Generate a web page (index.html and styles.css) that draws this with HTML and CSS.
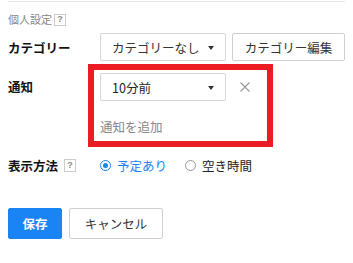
FILE: index.html
```html
<!DOCTYPE html>
<html lang="ja">
<head>
    <meta charset="UTF-8">
    <meta name="viewport" content="width=device-width, initial-scale=1.0">
    <title>個人設定</title>
    <link rel="stylesheet" href="styles.css">
</head>
<body>
    <div class="settings">
        <div class="section-title">個人設定<span class="help">?</span></div>

        <div class="row row-category">
            <div class="label">カテゴリー</div>
            <div class="controls">
                <div class="select select-category">カテゴリーなし<span class="caret"></span></div>
                <button class="btn btn-edit">カテゴリー編集</button>
            </div>
        </div>

        <div class="row row-notify">
            <div class="label label-top">通知</div>
            <div class="highlight">
                <div class="notify-item">
                    <div class="select select-time">10分前<span class="caret"></span></div>
                    <button class="remove" aria-label="削除">
                        <svg width="10" height="10" viewBox="0 0 10 10">
                            <path d="M0.5 0.5 L9.5 9.5 M9.5 0.5 L0.5 9.5" stroke="#9a9a9a" stroke-width="1.1" fill="none"/>
                        </svg>
                    </button>
                </div>
                <a class="add-link">通知を追加</a>
            </div>
        </div>

        <div class="row row-display">
            <div class="label">表示方法<span class="help help-inline">?</span></div>
            <label class="radio checked"><span class="radio-mark"></span>予定あり</label>
            <label class="radio"><span class="radio-mark"></span>空き時間</label>
        </div>

        <div class="actions">
            <button class="btn btn-primary">保存</button>
            <button class="btn btn-cancel">キャンセル</button>
        </div>
    </div>
</body>
</html>
```

FILE: styles.css
```css
body {
    margin: 0;
    font-family: "Noto Sans CJK JP", sans-serif;
    font-size: 12.5px;
    color: #222;
    background: #fff;
}
.settings {
    padding: 0 8px;
}
.section-title {
    margin-top: 1px;
    border-top: 1px solid #e8e8e8;
    padding-top: 11px;
    display: flex;
    align-items: center;
    font-size: 11px;
    line-height: 13px;
    color: #888;
    margin-bottom: 7px;
}
.help {
    display: inline-flex;
    align-items: center;
    justify-content: center;
    width: 10px;
    height: 10px;
    margin-left: 2px;
    border: 1px solid #ccc;
    font-size: 9px;
    line-height: 1;
    color: #888;
    font-family: "Liberation Sans", sans-serif;
    font-weight: bold;
}
.help-inline {
    margin-left: 6px;
    height: 11px;
}
.row {
    display: flex;
    align-items: center;
}
.label {
    width: 92px;
    flex: none;
    display: flex;
    align-items: center;
    font-weight: bold;
    color: #111;
}
.label-top {
    align-self: flex-start;
    margin-top: 9px;
    line-height: 28px;
}
.row-category {
    height: 28px;
    margin-bottom: 3px;
}
.controls {
    display: flex;
    gap: 6px;
}
.select {
    box-sizing: border-box;
    height: 28px;
    border: 1px solid #d6d6d6;
    border-radius: 2px;
    display: flex;
    align-items: center;
    padding: 0 11px;
    position: relative;
    color: #333;
}
.select-category {
    width: 126px;
}
.select-time {
    width: 126px;
    color: #222;
}
.caret {
    position: absolute;
    right: 11px;
    top: 12px;
    width: 0;
    height: 0;
    border-left: 3.5px solid transparent;
    border-right: 3.5px solid transparent;
    border-top: 4px solid #333;
}
.btn {
    box-sizing: border-box;
    height: 28px;
    border: 1px solid #cfcfcf;
    border-radius: 2px;
    background: #fff;
    font-family: inherit;
    font-size: 12.5px;
    color: #333;
    padding: 0;
}
.btn-edit {
    width: 113px;
}
.highlight {
    box-sizing: border-box;
    width: 185px;
    margin-left: -12px;
    border: 6px solid #ec1c24;
    padding: 3px 6px 5px;
}
.notify-item {
    display: flex;
    align-items: center;
}
.remove {
    border: none;
    background: none;
    padding: 0;
    margin-left: 14px;
    width: 10px;
    height: 10px;
    display: flex;
}
.add-link {
    display: block;
    margin-top: 17px;
    line-height: 18px;
    color: #888;
}
.row-display {
    margin-top: 8px;
    height: 20px;
}
.radio {
    display: flex;
    align-items: center;
    color: #222;
    margin-right: 18px;
}
.radio.checked {
    color: #1a82f5;
}
.radio-mark {
    box-sizing: border-box;
    width: 11px;
    height: 11px;
    border: 1px solid #999;
    border-radius: 50%;
    margin-right: 6px;
    position: relative;
}
.checked .radio-mark {
    border-color: #1a82f5;
}
.checked .radio-mark::after {
    content: "";
    position: absolute;
    left: 2px;
    top: 2px;
    width: 5px;
    height: 5px;
    border-radius: 50%;
    background: #1a82f5;
}
.actions {
    display: flex;
    gap: 7px;
    margin-top: 33px;
}
.actions .btn {
    height: 31px;
}
.btn-primary {
    width: 54px;
    background: #1a84f4;
    border-color: #1a84f4;
    color: #fff;
    font-weight: bold;
}
.btn-cancel {
    width: 94px;
}
```
